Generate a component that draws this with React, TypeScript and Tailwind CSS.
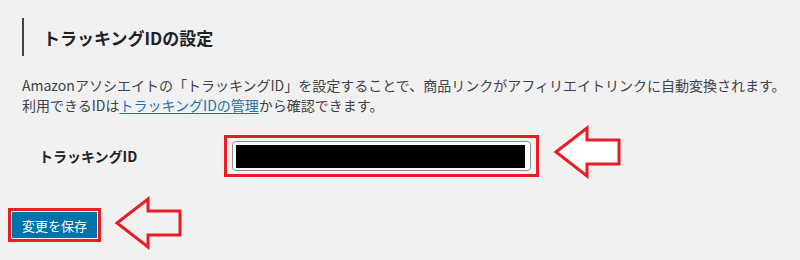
import React from "react";

const font = { fontFamily: '"Noto Sans CJK JP", "Noto Sans", sans-serif' };

function ArrowLeft({ fill, className }: { fill: string; className?: string }) {
  return (
    <svg width="70" height="54" viewBox="0 0 70 54" className={className}>
      <polygon
        points="4,27 35,3 35,15 67,15 67,39 35,39 35,51"
        fill={fill}
        stroke="#ec1c24"
        strokeWidth="3"
        strokeLinejoin="miter"
      />
    </svg>
  );
}

export default function App() {
  return (
    <div
      className="w-[800px] h-[260px] bg-[#f1f1f1] overflow-hidden flex flex-col [font-family:'Noto_Sans_CJK_JP',sans-serif]"
      style={font}
    >
      <div className="mt-[18px] ml-[22px] h-[38px] border-l-2 border-[#3c434a] pl-[19px] flex items-center">
        <h2 className="text-[17px] font-semibold text-[#1d2327] leading-none">トラッキングIDの設定</h2>
      </div>
      <div className="mt-[19px] pl-[22px] text-[14px] leading-[20px] text-[#3c434a] whitespace-nowrap">
        <p>Amazonアソシエイトの「トラッキングID」を設定することで、商品リンクがアフィリエイトリンクに自動変換されます。</p>
        <p>
          利用できるIDは
          <a className="text-[#2271b1] underline underline-offset-2">トラッキングIDの管理</a>
          から確認できます。
        </p>
      </div>
      <div className="mt-[20px] pl-[39px] flex items-start">
        <div className="w-[185px] h-[42px] flex items-center text-[14px] font-bold text-[#1d2327]">トラッキングID</div>
        <div className="w-[315px] h-[42px] border-[3px] border-[#ec1c24] pt-[3px] pl-[5px]">
          <div className="w-[299px] h-[30px] border border-[#8c8f94] rounded-[4px] bg-white pt-[3px] pl-[3px]">
            <div className="w-[289px] h-[23px] bg-black" />
          </div>
        </div>
        <ArrowLeft fill="#ffffff" className="ml-[13px] -mt-[10px]" />
      </div>
      <div className="mt-[29px] pl-[8px] flex items-start">
        <div className="w-[93px] h-[34px] border-[3px] border-[#ec1c24] p-px">
          <div className="w-[85px] h-[26px] bg-[#0073aa] text-white text-[13px] flex items-center justify-center leading-none">
            変更を保存
          </div>
        </div>
        <ArrowLeft fill="#f1f1f1" className="ml-[12px] -mt-[12px]" />
      </div>
    </div>
  );
}
